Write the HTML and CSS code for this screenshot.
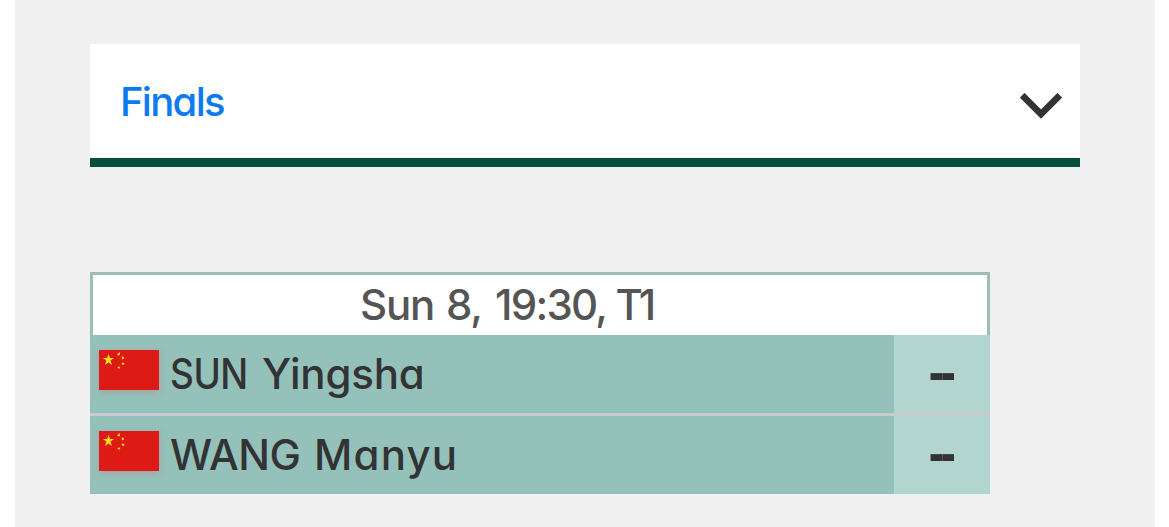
FILE: index.html
```
<!DOCTYPE html>
<html lang="en">
<head>
<meta charset="UTF-8">
<meta name="viewport" content="width=device-width, initial-scale=1.0">
<title>Finals</title>
<link rel="stylesheet" href="styles.css">
</head>
<body>
<svg width="0" height="0" class="defs">
  <symbol id="flag-chn" viewBox="0 0 60 40">
    <path fill="#de1a17" d="M0 0h60v40H0z"/>
    <g fill="#ffde17">
      <path d="M9.500 4l1.400 4h4.100l-3.400 2.600 1.400 4.400-3.500-2.600L6 15l1.300-4.400L4 8h4.200z"/>
      <path d="M18 3.800l1.500-.3.700-1.500.8 1-.3 1.300.5 1-1.400-.4-.7.900z"/>
      <path d="M22.800 6l1.200 1 1.300-.2-.6 1 .6 1.300-1.400-.3-1 1z"/>
      <path d="M22 13l1.500-.1.500-.9.600.9h1.200l-.9 1 .3 1.100-1.200-.6-1 .6.200-1.200z"/>
      <path d="M18 17l1.300-.1.900-1.200.2 1.400 1.100.3-1.100.7-.1 1.200-.8-.9z"/>
    </g>
  </symbol>
</svg>
<div class="page">
  <div class="phase_select">
    <a href="#" class="phase_name">Finals</a>
    <svg class="chevron" width="42" height="27" viewBox="0 0 42 27">
      <path d="M2.200 2.200L21 21 39.800 2.200" fill="none" stroke="#333" stroke-width="6.600"/>
    </svg>
  </div>
  <div class="match">
    <div class="match_info"><span class="day">Sun 8,</span> <span class="time">19:30,</span> <span class="table">T1</span></div>
    <div class="player">
      <div class="player_name">
        <svg class="flag"><use href="#flag-chn"/></svg>
        <span class="family sun">SUN</span>
        <span class="given">Yingsha</span>
      </div>
      <div class="score"><span>--</span></div>
    </div>
    <div class="player">
      <div class="player_name">
        <svg class="flag"><use href="#flag-chn"/></svg>
        <span class="family wang">WANG</span>
        <span class="given manyu">Manyu</span>
      </div>
      <div class="score"><span>--</span></div>
    </div>
  </div>
</div>
</body>
</html>
```
FILE: styles.css
```
* {
  margin: 0;
  padding: 0;
  box-sizing: border-box;
}
body {
  background: #fff;
  font-family: Inter, "Liberation Sans", sans-serif;
  font-weight: 500;
  font-feature-settings: "cv11";
  color: #333;
  overflow: hidden;
}
.defs {
  position: absolute;
}
.page {
  width: 1140px;
  height: 527px;
  margin-left: 15px;
  padding: 44px 75px 0;
  background: #f0f0f0;
}
.phase_select {
  display: flex;
  align-items: center;
  justify-content: space-between;
  height: 123px;
  padding: 0 18px 0 30px;
  background: #fff;
  border-bottom: 9px solid #054f3f;
}
.phase_name {
  color: #0d7af0;
  font-size: 40px;
  letter-spacing: -1.7px;
  text-decoration: none;
}
.chevron {
  margin-top: 10px;
}
.match {
  width: 900px;
  margin-top: 105px;
}
.match_info {
  height: 63px;
  border: 3px solid #9fbdb7;
  border-bottom: 0;
  padding-left: 267px;
  background: #fff;
  color: #555;
  font-size: 42px;
  line-height: 60px;
  letter-spacing: -1.2px;
  white-space: nowrap;
}
.day {
  word-spacing: 2px;
}
.time {
  margin-left: 3px;
  letter-spacing: -1.7px;
}
.table {
  margin-left: -1px;
  letter-spacing: -4px;
}
.player {
  display: flex;
  height: 78px;
}
.player + .player {
  height: 81px;
  border-top: 3px solid #c5cdcb;
}
.player_name {
  display: flex;
  align-items: flex-start;
  flex: 1;
  padding-left: 9px;
  background: #94c2bb;
  font-size: 42px;
  line-height: 78px;
  white-space: nowrap;
}
.flag {
  width: 60px;
  height: 40px;
  margin: 15px 11px 0 0;
  box-shadow: 0 2px 8px rgba(190, 110, 110, 0.4);
}
.family {
  transform-origin: 0 50%;
  letter-spacing: -0.5px;
}
.sun {
  width: 92px;
  transform: scaleX(0.88);
}
.wang {
  width: 144px;
}
.given {
  letter-spacing: -0.2px;
}
.manyu {
  letter-spacing: 1.2px;
}
.score {
  width: 96px;
  padding-right: 3px;
  background: #b2d5cf;
  font-family: "Liberation Sans", sans-serif;
  font-size: 46px;
  font-weight: 700;
  line-height: 75px;
  text-align: center;
}
.score span {
  display: inline-block;
  letter-spacing: -3.5px;
  transform: scaleY(1.25);
}
```
